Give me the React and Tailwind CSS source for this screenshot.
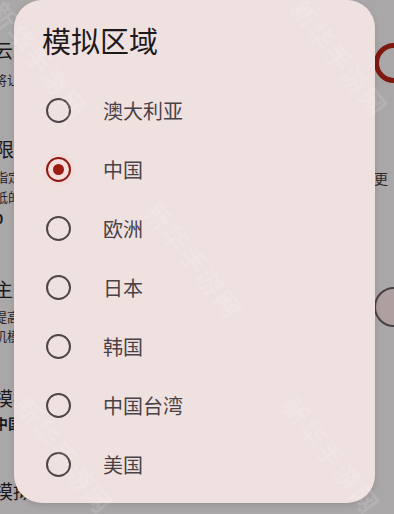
import React from "react";

const FONT = { fontFamily: '"Noto Sans CJK SC", "Noto Sans", sans-serif' };

const regions = ["澳大利亚", "中国", "欧洲", "日本", "韩国", "中国台湾", "美国"];
const selected = "中国";

function Radio({ checked }) {
  if (checked) {
    return (
      <div className="relative flex h-[25px] w-[25px] items-center justify-center">
        <div className="absolute h-[32px] w-[32px] rounded-full bg-[#f3dbda]" />
        <div className="relative flex h-[25px] w-[25px] items-center justify-center rounded-full border-[2.5px] border-[#8e1a12] bg-[#f6dcdb]">
          <div className="h-[11px] w-[11px] rounded-full bg-[#9a1c12]" />
        </div>
      </div>
    );
  }
  return <div className="h-[25px] w-[25px] rounded-full border-[2.5px] border-[#4f4548]" />;
}

function Watermark({ className }) {
  return (
    <div
      className={`pointer-events-none absolute whitespace-nowrap text-[26px] font-bold tracking-[2px] text-white/15 ${className}`}
    >
      新华手游网
    </div>
  );
}

export default function App() {
  return (
    <div className="relative h-[514px] w-[394px] overflow-hidden bg-[#aaa7a9]" style={FONT}>
      {/* dimmed background page */}
      <div className="flex flex-col text-[#1b1718]">
        <div className="flex h-[130px] items-start justify-between">
          <div className="-ml-[6px] pt-[37px]">
            <div className="text-[19px] leading-[26px]">云端同步</div>
            <div className="mt-[8px] text-[13px] leading-[18px] text-[#2a2526]">将让您的数据同步</div>
          </div>
          <div className="-mr-[20px] mt-[43px] h-[40px] w-[40px] rounded-full border-[5px] border-[#7e1912]" />
        </div>
        <div className="flex h-[138px] items-start justify-between">
          <div className="-ml-[5px] pt-[6px]">
            <div className="text-[19px] leading-[26px]">限制</div>
            <div className="mt-[5px] text-[13px] leading-[20px] text-[#2a2526]">指定设备使用</div>
            <div className="text-[13px] leading-[20px] text-[#2a2526]">抵的数据</div>
            <div className="mt-[1px] text-[14px] font-bold leading-[20px]">0</div>
          </div>
          <div className="mr-[6px] mt-[38px] text-[14px] text-[#2a2526]">更</div>
        </div>
        <div className="flex h-[110px] items-start justify-between">
          <div className="-ml-[6px] pt-[8px]">
            <div className="text-[19px] leading-[26px]">主题</div>
            <div className="mt-[5px] text-[13px] leading-[19px] text-[#2a2526]">提高性能</div>
            <div className="text-[13px] leading-[19px] text-[#2a2526]">机模式</div>
          </div>
          <div className="-mr-[20px] mt-[19px] h-[40px] w-[40px] rounded-full border-[2px] border-[#4a4142] bg-[#ae9fa1]" />
        </div>
        <div className="-ml-[6px] pt-[7px]">
          <div className="text-[19px] leading-[26px]">模拟区域</div>
          <div className="mt-[2px] text-[14px] font-bold leading-[20px]">中国</div>
          <div className="mt-[45px] text-[19px] leading-[26px]">模拟设备</div>
        </div>
      </div>

      {/* dialog */}
      <div className="absolute left-[14px] top-0 flex h-[503px] w-[361px] flex-col rounded-[28px] bg-[#f0e1e1] shadow-[0_2px_6px_rgba(0,0,0,0.12)]">
        <div className="flex h-[81px] items-center pl-[28px] pb-[1px]">
          <div className="text-[29px] leading-[38px] text-[#1e1a1b]">模拟区域</div>
        </div>
        <div className="flex flex-col">
          {regions.map((r) => (
            <div key={r} className="flex h-[59px] items-center pl-[32px]">
              <Radio checked={r === selected} />
              <div className="ml-[32px] text-[20px] leading-[28px] text-[#4a4245]">{r}</div>
            </div>
          ))}
        </div>
      </div>

      {/* watermarks */}
      <Watermark className="left-[270px] top-[38px] rotate-[52deg]" />
      <Watermark className="-left-[30px] top-[40px] rotate-[52deg]" />
      <Watermark className="left-[125px] top-[240px] rotate-[52deg]" />
      <Watermark className="-left-[5px] top-[435px] rotate-[52deg]" />
      <Watermark className="left-[262px] top-[435px] rotate-[52deg]" />
    </div>
  );
}
